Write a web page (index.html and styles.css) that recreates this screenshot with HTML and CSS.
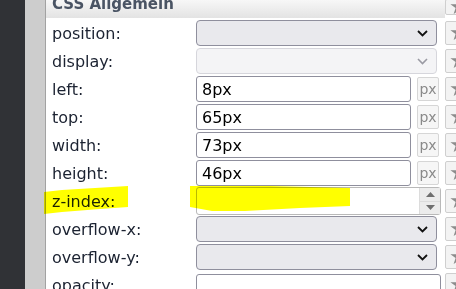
FILE: index.html
```html
<!DOCTYPE html>
<html lang="de">
<head>
    <meta charset="UTF-8">
    <title>CSS Allgemein</title>
    <link rel="stylesheet" href="styles.css">
</head>
<body>
    <div class="sidebar"></div>
    <div class="gutter"></div>

    <div class="panel">
        <div class="panel-head">
            <div class="panel-title">CSS Allgemein</div>
            <span class="star">★</span>
        </div>

        <div class="row">
            <label class="label">position:</label>
            <div class="select-wrap">
                <select class="select"><option></option></select>
                <svg class="chevron" width="11" height="7" viewBox="0 0 11 7"><path d="M1 1l4.5 4.5L10 1" fill="none" stroke="#111" stroke-width="1.8"/></svg>
            </div>
            <span class="star">★</span>
        </div>

        <div class="row">
            <label class="label">display:</label>
            <div class="select-wrap">
                <select class="select" disabled><option></option></select>
                <svg class="chevron" width="11" height="7" viewBox="0 0 11 7"><path d="M1 1l4.5 4.5L10 1" fill="none" stroke="#9a9aa3" stroke-width="1.6"/></svg>
            </div>
            <span class="star">★</span>
        </div>

        <div class="row">
            <label class="label">left:</label>
            <input class="text-input" type="text" value="8px">
            <button class="unit">px</button>
            <span class="star">★</span>
        </div>

        <div class="row">
            <label class="label">top:</label>
            <input class="text-input" type="text" value="65px">
            <button class="unit">px</button>
            <span class="star">★</span>
        </div>

        <div class="row">
            <label class="label">width:</label>
            <input class="text-input" type="text" value="73px">
            <button class="unit">px</button>
            <span class="star">★</span>
        </div>

        <div class="row">
            <label class="label">height:</label>
            <input class="text-input" type="text" value="46px">
            <button class="unit">px</button>
            <span class="star">★</span>
        </div>

        <div class="row">
            <label class="label">z-index:</label>
            <div class="number">
                <span class="spin">
                    <span class="spin-btn"><svg width="9" height="5" viewBox="0 0 9 5"><path d="M0 5L4.5 0L9 5z" fill="#6f6f6f"/></svg></span>
                    <span class="spin-btn"><svg width="9" height="5" viewBox="0 0 9 5"><path d="M0 0L4.5 5L9 0z" fill="#6f6f6f"/></svg></span>
                </span>
            </div>
            <span class="star">★</span>
        </div>

        <div class="row">
            <label class="label">overflow-x:</label>
            <div class="select-wrap">
                <select class="select"><option></option></select>
                <svg class="chevron" width="11" height="7" viewBox="0 0 11 7"><path d="M1 1l4.5 4.5L10 1" fill="none" stroke="#111" stroke-width="1.8"/></svg>
            </div>
            <span class="star">★</span>
        </div>

        <div class="row">
            <label class="label">overflow-y:</label>
            <div class="select-wrap">
                <select class="select"><option></option></select>
                <svg class="chevron" width="11" height="7" viewBox="0 0 11 7"><path d="M1 1l4.5 4.5L10 1" fill="none" stroke="#111" stroke-width="1.8"/></svg>
            </div>
            <span class="star">★</span>
        </div>

        <div class="row">
            <label class="label">opacity:</label>
            <input class="text-input wide" type="text" value="">
            <span class="star">★</span>
        </div>
    </div>

    <!-- marker strokes drawn over the screenshot -->
    <svg class="marker" width="456" height="289" viewBox="0 0 456 289">
        <path d="M44 192L62 190L128 186L128 207L100 209L62 212L44 214z" fill="#ffff00"/>
        <path d="M190 186L270 186L350 188L350 206L300 208L245 211L212 211L190 207z" fill="#ffff00"/>
    </svg>
</body>
</html>
```

FILE: styles.css
```css
body {
    margin: 0;
    height: 289px;
    display: flex;
    overflow: hidden;
    font-family: "DejaVu Sans", Verdana, sans-serif;
    background-color: #ffffff;
}
.sidebar {
    width: 25px;
    background-color: #303236;
}
.gutter {
    width: 20px;
    background-color: #cdcdcd;
    border-right: 1px solid #a2a2a2;
}
.panel {
    flex: 1;
    overflow: hidden;
}

/* header */
.panel-head {
    display: flex;
    height: 18px;
    margin-bottom: 1px;
}
.panel-title {
    flex: 0 0 393px;
    padding-left: 6px;
    font-size: 15px;
    font-weight: bold;
    line-height: 8px;
    color: #4a5464;
    background: linear-gradient(#f7f7f7, #e3e3e3);
}
.panel-head .star {
    height: 16px;
    margin: -1px 0 0 0;
    line-height: 14px;
}

/* rows */
.row {
    display: flex;
    align-items: center;
    height: 28px;
    padding-left: 6px;
}
.label {
    flex: 0 0 144px;
    font-size: 16px;
    color: #1b2231;
}
.select-wrap {
    position: relative;
    flex: 0 0 241px;
    height: 26px;
    margin-right: 8px;
}
.select {
    appearance: none;
    width: 100%;
    height: 100%;
    margin: 0;
    border: 1px solid #8f8f9d;
    border-radius: 4px;
    background-color: #e9e9ed;
    box-sizing: border-box;
}
.select:disabled {
    border-color: #c6c6ce;
    background-color: #f0f0f3;
}
.chevron {
    position: absolute;
    right: 9px;
    top: 10px;
}
.text-input {
    flex: 0 0 215px;
    height: 26px;
    margin: 0 6px 0 0;
    padding: 0 5px;
    border: 1px solid #8f8f9d;
    border-radius: 3px;
    box-sizing: border-box;
    font-family: inherit;
    font-size: 16px;
    color: #000;
}
.text-input.wide {
    flex-basis: 245px;
    margin-right: 4px;
    margin-top: 3px;
}
.unit {
    flex: 0 0 22px;
    height: 24px;
    margin-right: 6px;
    padding: 0;
    border: 1px solid #d6d6d6;
    border-radius: 2px;
    background-color: #f6f6f6;
    font-family: inherit;
    font-size: 14px;
    color: #8a8a8a;
}
.number {
    flex: 0 0 245px;
    height: 28px;
    margin-right: 4px;
    display: flex;
    justify-content: flex-end;
    border: 1px solid #b9b9b9;
    border-radius: 3px;
    box-sizing: border-box;
}
.spin {
    display: flex;
    flex-direction: column;
    width: 21px;
}
.spin-btn {
    flex: 1;
    display: flex;
    align-items: center;
    justify-content: center;
    background-color: #ececec;
    border-left: 1px solid #dcdcdc;
}
.spin-btn + .spin-btn {
    border-top: 1px solid #dcdcdc;
}
.star {
    flex: 0 0 22px;
    height: 24px;
    padding-left: 3px;
    border: 1px solid #cfcfcf;
    border-radius: 2px;
    background-color: #f3f3f3;
    box-sizing: border-box;
    font-size: 22px;
    line-height: 22px;
    color: #8c8c8c;
}

/* highlighter: multiply keeps the text readable */
.marker {
    position: absolute;
    top: 0;
    left: 0;
    pointer-events: none;
    mix-blend-mode: multiply;
}
```
